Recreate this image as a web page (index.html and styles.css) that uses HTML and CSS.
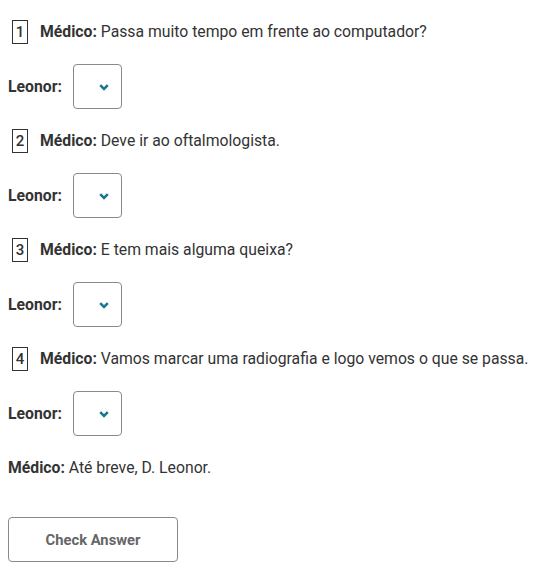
FILE: index.html
```html
<!DOCTYPE html>
<html lang="pt">
<head>
<meta charset="utf-8">
<link rel="stylesheet" href="styles.css">
</head>
<body>
<div class="dialog">
  <div class="item">
    <div class="q"><span class="num">1</span><span><b>Médico:</b> Passa muito tempo em frente ao computador?</span></div>
    <div class="a"><b>Leonor:</b><button class="sel"><svg width="10" height="7" viewBox="0 0 10 7"><path d="M1.2 1.2 L5 5 L8.8 1.2" fill="none" stroke="#17788a" stroke-width="2.5"/></svg></button></div>
  </div>
  <div class="item">
    <div class="q"><span class="num">2</span><span><b>Médico:</b> Deve ir ao oftalmologista.</span></div>
    <div class="a"><b>Leonor:</b><button class="sel"><svg width="10" height="7" viewBox="0 0 10 7"><path d="M1.2 1.2 L5 5 L8.8 1.2" fill="none" stroke="#17788a" stroke-width="2.5"/></svg></button></div>
  </div>
  <div class="item">
    <div class="q"><span class="num">3</span><span><b>Médico:</b> E tem mais alguma queixa?</span></div>
    <div class="a"><b>Leonor:</b><button class="sel"><svg width="10" height="7" viewBox="0 0 10 7"><path d="M1.2 1.2 L5 5 L8.8 1.2" fill="none" stroke="#17788a" stroke-width="2.5"/></svg></button></div>
  </div>
  <div class="item">
    <div class="q"><span class="num">4</span><span><b>Médico:</b> Vamos marcar uma radiografia e logo vemos o que se passa.</span></div>
    <div class="a"><b>Leonor:</b><button class="sel"><svg width="10" height="7" viewBox="0 0 10 7"><path d="M1.2 1.2 L5 5 L8.8 1.2" fill="none" stroke="#17788a" stroke-width="2.5"/></svg></button></div>
  </div>
  <p class="final"><b>Médico:</b> Até breve, D. Leonor.</p>
  <button class="check">Check Answer</button>
</div>
</body>
</html>
```
FILE: styles.css
```css
html, body { margin: 0; padding: 0; background: #fff; }
body {
  padding: 8px;
  font-family: Roboto, "Noto Sans", sans-serif;
  font-size: 15.75px;
  color: #333;
}
b { font-weight: 700; }
.q {
  display: flex;
  align-items: center;
  height: 24px;
  margin-top: 12px;
  margin-bottom: 20px;
  line-height: 24px;
}
.item + .item .q { margin-top: 0; }
.num {
  box-sizing: border-box;
  width: 16px;
  height: 24px;
  border: 1px solid #333;
  margin-left: 4px;
  margin-right: 12px;
  font-size: 15px;
  font-weight: 500;
  line-height: 22px;
  text-align: center;
}
.a {
  display: flex;
  align-items: center;
  height: 45px;
  margin-bottom: 20px;
}
.sel {
  box-sizing: border-box;
  width: 49px;
  height: 45px;
  margin-left: 11px;
  border: 1px solid #8a8a8a;
  border-radius: 4px;
  background: #fff;
  display: flex;
  align-items: center;
  justify-content: center;
  padding: 1px 0 0 14px;
}
.final {
  margin: 0;
  line-height: 24px;
  height: 24px;
}
.check {
  box-sizing: border-box;
  display: block;
  margin-top: 37px;
  width: 170px;
  height: 45px;
  border: 1px solid #8a8a8a;
  border-radius: 4px;
  background: #fff;
  font-family: Roboto, "Noto Sans", sans-serif;
  font-weight: 700;
  font-size: 14.75px;
  color: #666;
}
```
